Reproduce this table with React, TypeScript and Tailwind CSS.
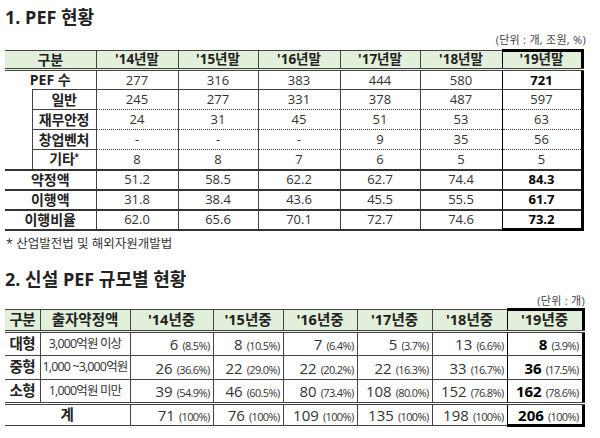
import React from 'react';

const line = 'border-[#444]';

const t1Years = ["'14년말", "'15년말", "'16년말", "'17년말", "'18년말", "'19년말"];
const t2Years = ["'14년중", "'15년중", "'16년중", "'17년중", "'18년중", "'19년중"];

const subRows = [
  { label: '일반', vals: ['245', '277', '331', '378', '487', '597'] },
  { label: '재무안정', vals: ['24', '31', '45', '51', '53', '63'] },
  { label: '창업벤처', vals: ['-', '-', '-', '9', '35', '56'] },
  { label: '기타', vals: ['8', '8', '7', '6', '5', '5'], star: true },
];

const amountRows = [
  { label: '약정액', vals: ['51.2', '58.5', '62.2', '62.7', '74.4', '84.3'] },
  { label: '이행액', vals: ['31.8', '38.4', '43.6', '45.5', '55.5', '61.7'] },
  { label: '이행비율', vals: ['62.0', '65.6', '70.1', '72.7', '74.6', '73.2'] },
];

const sizeRows = [
  { label: '대형', range: '3,000억원 이상', vals: [['6', '(8.5%)'], ['8', '(10.5%)'], ['7', '(6.4%)'], ['5', '(3.7%)'], ['13', '(6.6%)'], ['8', '(3.9%)']] },
  { label: '중형', range: '1,000 ~3,000억원', vals: [['26', '(36.6%)'], ['22', '(29.0%)'], ['22', '(20.2%)'], ['22', '(16.3%)'], ['33', '(16.7%)'], ['36', '(17.5%)']] },
  { label: '소형', range: '1,000억원 미만', vals: [['39', '(54.9%)'], ['46', '(60.5%)'], ['80', '(73.4%)'], ['108', '(80.0%)'], ['152', '(76.8%)'], ['162', '(78.6%)']] },
];
const totalVals = [['71', '(100%)'], ['76', '(100%)'], ['109', '(100%)'], ['135', '(100%)'], ['198', '(100%)'], ['206', '(100%)']];

function Val({ v, i, bold }: { v: string; i: number; bold?: boolean }) {
  const last = i === 5;
  return (
    <td className={`border-l border-solid ${line} text-center ${last ? 'border-x-[3px] border-x-black' : ''} ${last && bold ? 'font-bold text-black' : ''}`}>
      {v}
    </td>
  );
}

export default function App() {
  return (
    <div className="w-[600px] h-[438px] bg-white px-[5px] text-[#333] font-['Open_Sans','Noto_Sans_CJK_KR',sans-serif] overflow-hidden">
      <h1 className="pt-[5px] text-[18px] leading-[24px] font-bold text-[#222]">1. PEF 현황</h1>
      <p className="mt-[3px] pr-[9px] text-right text-[11px] leading-[16px] text-[#444] tracking-wide">(단위 : 개, 조원, %)</p>

      <table className="mt-[1px] w-[577px] table-fixed border-collapse text-[13px] leading-none">
        <colgroup>
          <col className="w-[27px]" />
          <col className="w-[64px]" />
          <col className="w-[82px]" />
          <col className="w-[80px]" />
          <col className="w-[82px]" />
          <col className="w-[80px]" />
          <col className="w-[82px]" />
          <col className="w-[80px]" />
        </colgroup>
        <thead>
          <tr className={`h-[19px] bg-[#e2efda] border-t ${line} border-b-[3px] border-b-[#444] border-double text-[13.5px]`}>
            <th colSpan={2} className="font-bold text-[#222] text-[14px]">구분</th>
            {t1Years.map((y, i) => (
              <th key={y} className={`border-l ${line} font-bold text-[#222] ${i === 5 ? 'border-x-[3px] border-x-black border-t-[3px] border-t-black' : ''}`}>{y}</th>
            ))}
          </tr>
        </thead>
        <tbody>
          <tr className="h-[20px]">
            <td colSpan={2} className="text-center font-bold text-[#222] text-[14px]">PEF 수</td>
            {['277', '316', '383', '444', '580', '721'].map((v, i) => <Val key={i} v={v} i={i} bold />)}
          </tr>
          {subRows.map((r, ri) => (
            <tr key={r.label} className="h-[20px]">
              {ri === 0 && <td rowSpan={4} />}
              <td className={`border-l border-t ${line} text-center font-bold text-[#222] text-[14px] tracking-[-0.02em] whitespace-nowrap`}>
                {r.label}
                {r.star && <sup className="text-[8px]">*</sup>}
              </td>
              {r.vals.map((v, i) => (
                <td key={i} className={`border-l ${line} border-t text-center ${i === 5 ? 'border-x-[3px] border-x-black' : ''}`} style={{ borderTopStyle: ri === 0 ? 'solid' : 'dotted' }}>
                  {v}
                </td>
              ))}
            </tr>
          ))}
          {amountRows.map((r, ri) => (
            <tr key={r.label} className={`h-[20px] border-t-2 border-t-[#333] ${ri === 2 ? 'border-b-2 border-b-[#333]' : ''}`}>
              <td colSpan={2} className="text-center font-bold text-[#222] text-[14px]">{r.label}</td>
              {r.vals.map((v, i) => (
                <td key={i} className={`border-l ${line} text-center ${i === 5 ? `border-x-[3px] border-x-black font-bold text-black ${ri === 2 ? 'border-b-[3px] border-b-black' : ''}` : ''}`}>
                  {v}
                </td>
              ))}
            </tr>
          ))}
        </tbody>
      </table>

      <p className="mt-[5px] pl-[1px] text-[12.5px] leading-[16px] text-[#333]">* 산업발전법 및 해외자원개발법</p>

      <h2 className="mt-[15px] text-[18px] leading-[24px] font-bold text-[#222]">2. 신설 PEF 규모별 현황</h2>
      <p className="mt-[2px] pr-[10px] text-right text-[11px] leading-[16px] text-[#444] tracking-wide">(단위 : 개)</p>

      <table className="mt-[-1px] w-[578px] table-fixed border-collapse leading-none">
        <colgroup>
          <col className="w-[35px]" />
          <col className="w-[90px]" />
          <col className="w-[83px]" />
          <col className="w-[70px]" />
          <col className="w-[74px]" />
          <col className="w-[75px]" />
          <col className="w-[75px]" />
          <col className="w-[76px]" />
        </colgroup>
        <thead>
          <tr className={`h-[22px] bg-[#e2efda] border-t ${line} border-b-[3px] border-b-[#444] border-double text-[14.5px]`}>
            <th className="font-bold text-[#222] tracking-[-0.04em]">구분</th>
            <th className={`border-l ${line} font-bold text-[#222]`}>출자약정액</th>
            {t2Years.map((y, i) => (
              <th key={y} className={`border-l ${line} font-bold text-[#222] ${i === 5 ? 'border-x-[3px] border-x-black border-t-[3px] border-t-black' : ''}`}>{y}</th>
            ))}
          </tr>
        </thead>
        <tbody>
          {sizeRows.map((r, ri) => (
            <tr key={r.label} className={`h-[24px] ${ri > 0 ? `border-t ${line}` : ''}`}>
              <td className="text-center text-[14.5px] font-bold text-[#222] tracking-[-0.04em] whitespace-nowrap">{r.label}</td>
              <td className={`border-l ${line} text-center text-[12.5px] tracking-[-0.07em] text-[#333] whitespace-nowrap`}>{r.range}</td>
              {r.vals.map(([n, p], i) => (
                <td key={i} className={`border-l ${line} pr-[3px] text-right whitespace-nowrap ${i === 5 ? 'border-x-[3px] border-x-black' : ''}`}>
                  <span className={`text-[15px] ${i === 5 ? 'font-bold text-black' : ''}`}>{n}</span>{' '}
                  <span className="text-[11px] tracking-[-0.06em]">{p}</span>
                </td>
              ))}
            </tr>
          ))}
          <tr className={`h-[22px] border-t-[3px] border-t-[#444] border-double border-b ${line}`}>
            <td colSpan={2} className="text-center text-[14.5px] font-bold text-[#222]">계</td>
            {totalVals.map(([n, p], i) => (
              <td key={i} className={`border-l ${line} pr-[3px] text-right whitespace-nowrap ${i === 5 ? 'border-x-[3px] border-x-black border-b-[3px] border-b-black border-solid' : ''}`}>
                <span className={`text-[15px] ${i === 5 ? 'font-bold text-black' : ''}`}>{n}</span>{' '}
                <span className="text-[11px] tracking-[-0.06em]">{p}</span>
              </td>
            ))}
          </tr>
        </tbody>
      </table>
    </div>
  );
}
